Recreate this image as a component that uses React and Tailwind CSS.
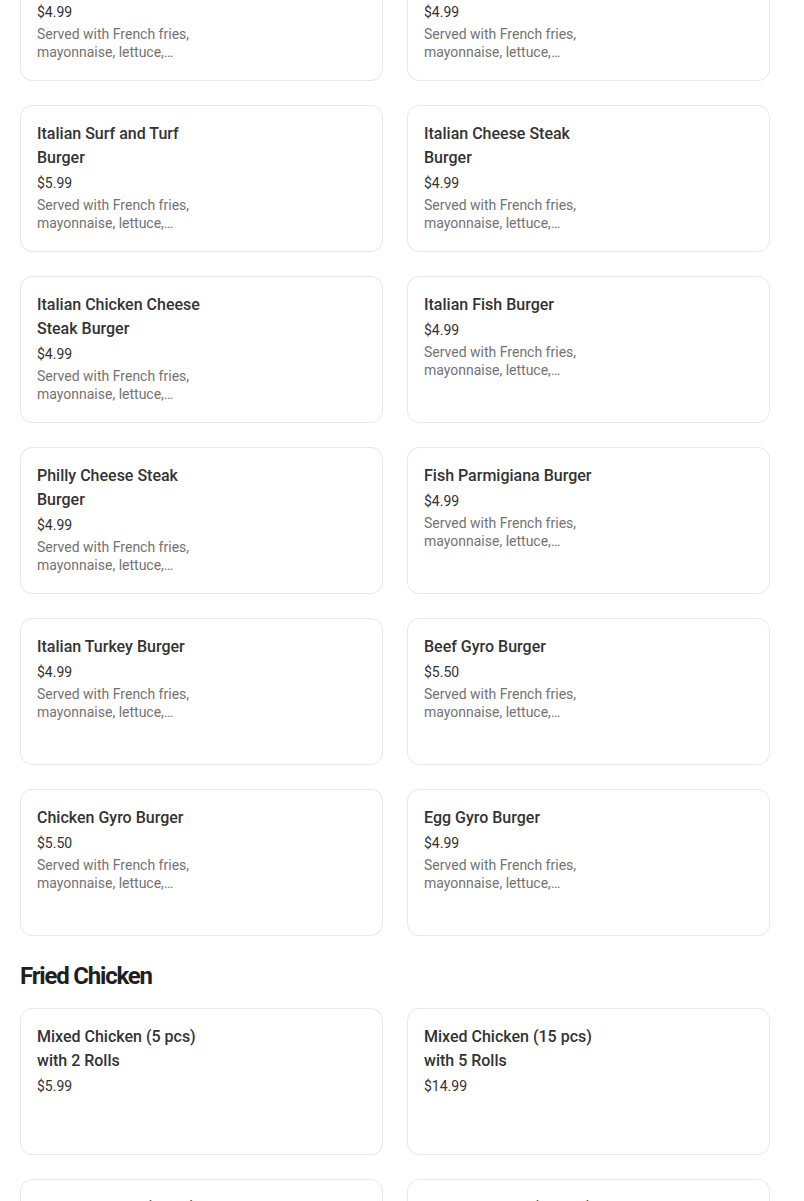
import React from "react";

const burgers = [
  { name: "Italian Mushroom Steak Burger", price: "$4.99", desc: true },
  { name: "Italian Chicken Steak Burger", price: "$4.99", desc: true },
  { name: "Italian Surf and Turf Burger", price: "$5.99", desc: true },
  { name: "Italian Cheese Steak Burger", price: "$4.99", desc: true },
  { name: "Italian Chicken Cheese Steak Burger", price: "$4.99", desc: true },
  { name: "Italian Fish Burger", price: "$4.99", desc: true },
  { name: "Philly Cheese Steak Burger", price: "$4.99", desc: true },
  { name: "Fish Parmigiana Burger", price: "$4.99", desc: true },
  { name: "Italian Turkey Burger", price: "$4.99", desc: true },
  { name: "Beef Gyro Burger", price: "$5.50", desc: true },
  { name: "Chicken Gyro Burger", price: "$5.50", desc: true },
  { name: "Egg Gyro Burger", price: "$4.99", desc: true },
];

const chicken = [
  { name: "Mixed Chicken (5 pcs) with 2 Rolls", price: "$5.99" },
  { name: "Mixed Chicken (15 pcs) with 5 Rolls", price: "$14.99" },
  { name: "Mixed Chicken (8 pcs) with 3 Rolls", price: "$8.99" },
  { name: "Mixed Chicken (20 pcs) with 6 Rolls", price: "$19.99" },
];

function ItemCard({ item }) {
  return (
    <div className="h-[147px] rounded-xl border border-[#e8e8e8] bg-white p-4">
      <div className="w-[178px]">
        <div className="text-[16px] font-medium leading-6 text-[#333333]">
          {item.name}
        </div>
        <div className="mt-[3px] text-[14px] leading-5 text-[#333333]">
          {item.price}
        </div>
        {item.desc && (
          <div className="mt-[3px] line-clamp-2 w-[170px] text-[14px] leading-[18px] text-[#737373]">
            Served with French fries, mayonnaise, lettuce, tomato and pickles
          </div>
        )}
      </div>
    </div>
  );
}

export default function App() {
  return (
    <div
      className="h-[1201px] overflow-hidden bg-white"
      style={{ fontFamily: "Roboto, 'Noto Sans', sans-serif" }}
    >
      <div className="-mt-[66px] pl-5 pr-[34px]">
        <div className="grid grid-cols-2 gap-6">
          {burgers.map((item) => (
            <ItemCard key={item.name} item={item} />
          ))}
        </div>

        <h2 className="mt-6 mb-4 text-[24px] font-bold leading-8 tracking-[-0.05em] text-[#1f1f1f]">
          Fried Chicken
        </h2>

        <div className="grid grid-cols-2 gap-6">
          {chicken.map((item) => (
            <ItemCard key={item.name} item={item} />
          ))}
        </div>
      </div>
    </div>
  );
}
